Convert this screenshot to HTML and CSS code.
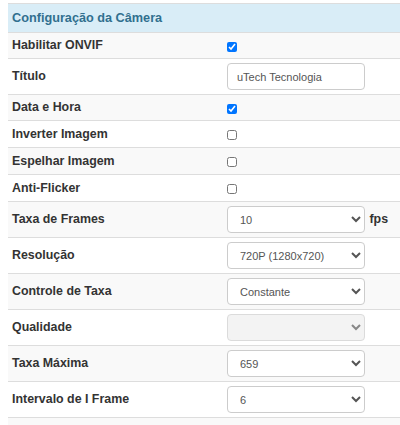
FILE: index.html
```html
<!DOCTYPE html>
<html lang="pt">
<head>
<meta charset="utf-8">
<link rel="stylesheet" href="styles.css">
</head>
<body>
<table class="cfg">
  <colgroup><col class="c1"><col class="c2"></colgroup>
  <thead>
    <tr><th colspan="2" class="head">Configuração da Câmera</th></tr>
  </thead>
  <tbody>
    <tr class="chk"><td class="lbl">Habilitar ONVIF</td><td><input type="checkbox" class="cb" checked></td></tr>
    <tr><td class="lbl">Título</td><td><input type="text" class="ctl" value="uTech Tecnologia"></td></tr>
    <tr class="chk"><td class="lbl">Data e Hora</td><td><input type="checkbox" class="cb" checked></td></tr>
    <tr class="chk tall"><td class="lbl">Inverter Imagem</td><td><input type="checkbox" class="cb"></td></tr>
    <tr class="chk tall"><td class="lbl">Espelhar Imagem</td><td><input type="checkbox" class="cb"></td></tr>
    <tr class="chk tall"><td class="lbl">Anti-Flicker</td><td><input type="checkbox" class="cb"></td></tr>
    <tr><td class="lbl">Taxa de Frames</td><td><select class="ctl"><option>10</option></select> <span class="unit">fps</span></td></tr>
    <tr><td class="lbl">Resolução</td><td><select class="ctl"><option>720P (1280x720)</option></select></td></tr>
    <tr><td class="lbl">Controle de Taxa</td><td><select class="ctl"><option>Constante</option></select></td></tr>
    <tr><td class="lbl">Qualidade</td><td><select class="ctl" disabled><option></option></select></td></tr>
    <tr><td class="lbl">Taxa Máxima</td><td><select class="ctl"><option>659</option></select></td></tr>
    <tr><td class="lbl">Intervalo de I Frame</td><td><select class="ctl"><option>6</option></select></td></tr>
    <tr class="chk"><td class="lbl">&nbsp;</td><td></td></tr>
  </tbody>
</table>
</body>
</html>
```
FILE: styles.css
```css
html, body {
  margin: 0;
  padding: 0;
  background: #fff;
  overflow: hidden;
}
body {
  padding: 3px 0 0 8px;
  font-family: "Liberation Sans", Arial, sans-serif;
  color: #333;
}
.cfg {
  border-collapse: collapse;
  table-layout: fixed;
  width: 392px;
  border-top: 1px solid #ddd;
}
.c1 { width: 214px; }
.head {
  background: #d9edf7;
  color: #31708f;
  font-size: 12.7px;
  font-weight: bold;
  text-align: left;
  padding: 6px 5px 5px 4px;
  line-height: 17px;
  border-bottom: 1px solid #ddd;
}
.cfg td {
  padding: 4px 5px;
  border-top: 1px solid #ddd;
  vertical-align: middle;
  line-height: 17px;
}
.cfg tr.tall td { line-height: 18px; }
.cfg tbody tr:nth-child(odd) td { background: #f9f9f9; }
.lbl {
  font-size: 12.4px;
  font-weight: bold;
  padding-left: 4px !important;
}
.cb {
  width: 10px;
  height: 10px;
  margin: 0;
  vertical-align: middle;
}
.ctl {
  box-sizing: border-box;
  width: 138px;
  height: 27px;
  border: 1px solid #ccc;
  border-radius: 4px;
  font-family: "Liberation Sans", Arial, sans-serif;
  font-size: 11px;
  color: #555;
  background-color: #fff;
  padding: 0 9px;
  margin: 0;
  vertical-align: middle;
}
select.ctl { padding: 0 6px 0 8px; }
select.ctl:disabled { background-color: #eee; }
.unit {
  font-size: 12.4px;
  font-weight: bold;
  vertical-align: middle;
}
```
